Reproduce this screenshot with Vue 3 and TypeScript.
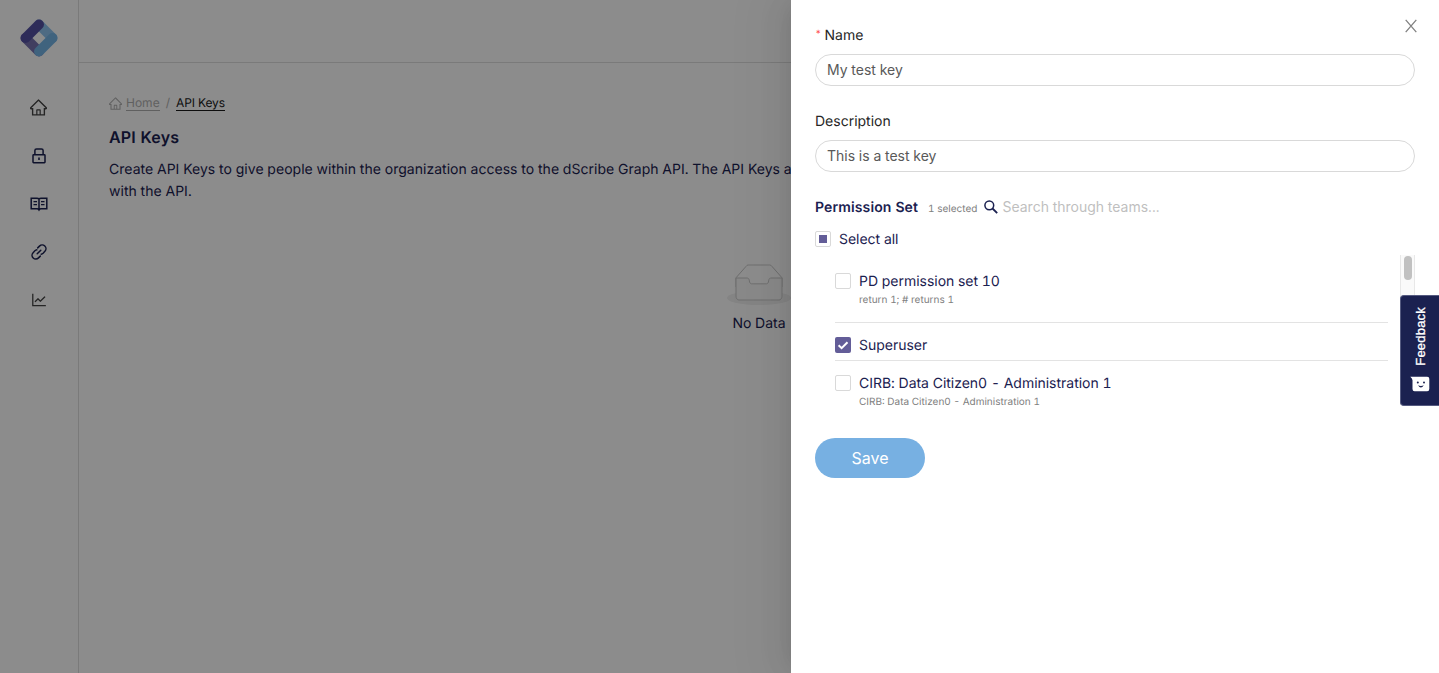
<script setup lang="ts">
import { ref } from 'vue'

interface Permission {
  name: string
  note?: string
  checked: boolean
}

const keyName = ref('My test key')
const description = ref('This is a test key')
const search = ref('')
const permissions = ref<Permission[]>([
  { name: 'PD permission set 10', note: 'return 1; # returns 1', checked: false },
  { name: 'Superuser', checked: true },
  { name: 'CIRB: Data Citizen0 - Administration 1', note: 'CIRB: Data Citizen0 - Administration 1', checked: false },
])
const homePath =
  'M946.5 505L560.1 118.8l-25.9-25.9a31.5 31.5 0 00-44.4 0L77.5 505a63.9 63.9 0 00-18.8 46c.4 35.2 29.7 63.3 64.9 63.3h42.5V940h691.8V614.3h43.4c17.1 0 33.2-6.7 45.3-18.8a63.6 63.6 0 0018.7-45.3c0-17-6.7-33.1-18.8-45.2zM568 868H456V664h112v204zm217.9-325.7V868H632V640c0-22.1-17.9-40-40-40H432c-22.1 0-40 17.9-40 40v228H238.1V542.3h-96l370-369.7 23.1 23.1L882 542.3h-96.1z'
</script>

<template>
  <div class="app">
    <aside class="sidebar">
      <svg class="logo" width="38" height="38" viewBox="0 0 38 38">
        <g fill="none" stroke-linecap="round" stroke-width="9.9">
          <path d="M19 5.500 L32.500 19" stroke="#8fc4ee" />
          <path d="M5.500 19 L19 32.500" stroke="#7771b0" />
          <path d="M32.500 19 L19 32.500" stroke="#76b4e6" />
          <path d="M19 5.500 L5.500 19" stroke="#5551a2" />
        </g>
      </svg>
      <nav class="nav">
        <a class="nav-item dark home">
          <svg width="17" height="17" viewBox="64 64 896 896" fill="currentColor"><path :d="homePath" /></svg>
        </a>
        <a class="nav-item">
          <svg width="16" height="16" viewBox="0 0 16 16" fill="none" stroke="currentColor" stroke-width="1.5">
            <rect x="2" y="6.800" width="12" height="7.900" rx=".6" />
            <path d="M3.900 7V2.600Q3.900 1 5.500 1h5Q12.100 1 12.100 2.600V7" />
            <path d="M8 9.400v2.600" stroke-width="1.600" />
          </svg>
        </a>
        <a class="nav-item">
          <svg width="18" height="16" viewBox="0 0 18 16" fill="none" stroke="currentColor" stroke-width="1.500">
            <path d="M9 3Q8.400 2.200 7 2.200H1.200v10.600H7q1.400 0 2 1.100q.6-1.100 2-1.100h5.800V2.200H11Q9.600 2.200 9 3V14.500" />
            <path d="M3.500 5.600h3.500M3.500 8.700h3.500M11 5.600h3.500M11 8.700h3.500" stroke-width="1.300" />
          </svg>
        </a>
        <a class="nav-item">
          <svg width="16" height="16" viewBox="0 0 16 16" fill="none" stroke="currentColor" stroke-width="1.500" stroke-linecap="round">
            <path d="M6.700 3.900L8.500 2.100A3.600 3.600 0 0 1 13.900 7.300L12.100 9.200Q11.200 10 10.200 10.200" />
            <path d="M9.300 12.100L7.500 13.900A3.600 3.600 0 0 1 2.100 8.700L3.900 6.800Q4.800 6 5.800 5.800" />
            <path d="M6.200 9.800L9.800 6.200" />
          </svg>
        </a>
        <a class="nav-item dark">
          <svg width="16" height="16" viewBox="64 64 896 896" fill="currentColor">
            <path d="M888 792H200V168c0-4.400-3.600-8-8-8h-56c-4.400 0-8 3.600-8 8v688c0 4.400 3.600 8 8 8h752c4.400 0 8-3.600 8-8v-56c0-4.400-3.600-8-8-8zM305.800 637.700c3.100 3.100 8.100 3.100 11.300 0l138.300-137.600L583 628.500c3.100 3.100 8.200 3.100 11.300 0l275.400-275.300c3.100-3.100 3.100-8.200 0-11.300l-39.600-39.600a8.030 8.030 0 00-11.300 0l-230 229.900L461.400 404a8.030 8.030 0 00-11.300 0L266.300 586.700a8.030 8.030 0 000 11.300l39.500 39.700z" />
          </svg>
        </a>
      </nav>
    </aside>

    <div class="page">
      <header class="topbar"></header>
      <main class="content">
        <div class="crumbs">
          <svg width="13" height="13" viewBox="64 64 896 896" fill="currentColor"><path :d="homePath" /></svg>
          <a class="crumb">Home</a><span class="sep">/</span><a class="crumb current">API Keys</a>
        </div>
        <h1>API Keys</h1>
        <p class="intro">
          Create API Keys to give people within the organization access to the dScribe Graph API. The API Keys are
          used to<br />with the API.
        </p>
        <div class="empty">
          <svg width="64" height="41" viewBox="0 0 64 41">
            <g transform="translate(0 1)" fill="none">
              <ellipse cx="32" cy="33" rx="32" ry="7" fill="#f0f0f0" />
              <g stroke="#c8c8c8">
                <path d="M55 12.760L44.854 1.258C44.367.474 43.656 0 42.907 0H21.093c-.749 0-1.460.474-1.947 1.257L9 12.761V22h46v-9.240z" />
                <path fill="#fafafa" d="M41.613 15.931c0-1.605.994-2.930 2.227-2.931H55v18.137C55 33.260 53.680 35 52.050 35h-40.100C10.320 35 9 33.259 9 31.137V13h11.160c1.233 0 2.227 1.323 2.227 2.928v.022c0 1.605 1.005 2.901 2.237 2.901h14.752c1.232 0 2.237-1.308 2.237-2.913v-.007z" />
              </g>
            </g>
          </svg>
          <span>No Data</span>
        </div>
      </main>
    </div>

    <div class="mask"></div>

    <section class="drawer">
      <button class="close" aria-label="Close">
        <svg width="12" height="14" viewBox="0 0 12 14" fill="none" stroke="currentColor" stroke-width="1.300">
          <path d="M.7 .9L11.300 13.100M11.300 .9L.7 13.100" />
        </svg>
      </button>
      <label class="label"><span class="star">*</span>Name</label>
      <input v-model="keyName" class="input" type="text" />
      <label class="label second">Description</label>
      <input v-model="description" class="input" type="text" />

      <div class="set-head">
        <strong>Permission Set</strong>
        <span class="count">1 selected</span>
        <svg width="14" height="14" viewBox="0 0 14 14" fill="none" stroke="currentColor" stroke-width="1.500">
          <circle cx="5.300" cy="5.300" r="4.400" />
          <path d="M8.500 8.500L13.200 13.200" stroke-width="1.800" />
        </svg>
        <input v-model="search" class="search" placeholder="Search through teams..." />
      </div>
      <div class="check-row all"><span class="box partial"></span><span class="text">Select all</span></div>

      <div class="list">
        <div class="items">
          <div v-for="p in permissions" :key="p.name" class="item" :class="{ noted: p.note }">
            <div class="check-row">
              <span class="box" :class="{ on: p.checked }">
                <svg v-if="p.checked" width="16" height="16" viewBox="0 0 16 16" fill="none" stroke="#fff" stroke-width="2">
                  <path d="M3.600 8.300L6.600 11.200L12.500 5.200" />
                </svg>
              </span>
              <span class="text">{{ p.name }}</span>
            </div>
            <div v-if="p.note" class="note">{{ p.note }}</div>
          </div>
        </div>
        <div class="track"><div class="thumb"></div></div>
      </div>

      <button class="save">Save</button>
    </section>

    <button class="feedback">
      <span>Feedback</span>
      <svg width="20" height="16" viewBox="0 0 20 16">
        <path fill="#fff" d="M.3 .8H17.200Q19.300 .8 19.300 2.800V13Q19.300 15.200 17.200 15.200H4.600Q2.500 15.200 2.500 13V4.300Q2.300 2.500 .3 .8z" />
        <circle cx="7.800" cy="6.400" r="1" fill="#1b2150" />
        <circle cx="14" cy="6.400" r="1" fill="#1b2150" />
        <path d="M8 9.200Q10.900 14 13.800 9.200Q10.900 10.600 8 9.200z" fill="#1b2150" />
      </svg>
    </button>
  </div>
</template>

<style>
body {
  margin: 0;
  overflow: hidden;
}
</style>

<style scoped>
* {
  box-sizing: border-box;
}
.app {
  position: relative;
  display: flex;
  width: 100%;
  height: 100vh;
  overflow: hidden;
  background: #fff;
  color: #1b2150;
  font: 14px/22px Inter, "Liberation Sans", sans-serif;
  font-variant-numeric: tabular-nums;
  text-rendering: geometricPrecision;
}
.sidebar {
  width: 79px;
  flex: none;
  display: flex;
  flex-direction: column;
  align-items: center;
  border-right: 1px solid #dedede;
  padding: 19px 1px 0 0;
}
.logo {
  display: block;
}
.nav {
  display: flex;
  flex-direction: column;
  margin-top: 27px;
}
.nav-item {
  display: flex;
  align-items: center;
  justify-content: center;
  width: 48px;
  height: 48px;
}
.nav-item.dark {
  color: #444;
}
.nav-item.home {
  padding-bottom: 1px;
}
.page {
  flex: 1;
  min-width: 0;
}
.topbar {
  height: 63px;
  border-bottom: 1px solid #dedede;
}
.content {
  padding: 30px 30px 0;
}
.crumbs {
  display: flex;
  align-items: center;
  height: 20px;
  color: #b0b0b0;
  font-size: 12px;
  line-height: 14px;
}
.crumb {
  margin-left: 4px;
  border-bottom: 1px solid currentColor;
}
.sep {
  margin: 0 2px 0 6px;
}
.crumb.current {
  color: #1a1a1a;
  letter-spacing: -0.1px;
}
h1 {
  margin: 13px 0 11px;
  font-size: 16px;
  line-height: 22px;
  font-weight: 600;
  letter-spacing: 0.2px;
}
.intro {
  margin: 0;
  white-space: nowrap;
  letter-spacing: 0.025px;
}
.empty {
  width: 64px;
  margin: 61px 0 0 618px;
  display: flex;
  flex-direction: column;
  align-items: center;
  gap: 8px;
  white-space: nowrap;
}
.mask {
  position: absolute;
  inset: 0;
  background: rgba(0, 0, 0, 0.45);
}
.drawer {
  position: absolute;
  top: 0;
  right: 0;
  bottom: 0;
  width: 648px;
  padding: 24px;
  background: #fff;
  box-shadow: -6px 0 16px -8px rgba(0, 0, 0, 0.08), -9px 0 28px rgba(0, 0, 0, 0.05), -12px 0 48px 16px rgba(0, 0, 0, 0.03);
}
button {
  border: 0;
  padding: 0;
  font: inherit;
}
.close {
  position: absolute;
  top: 19px;
  right: 22px;
  width: 12px;
  height: 14px;
  display: flex;
  background: none;
  color: #808080;
}
.label {
  display: flex;
  height: 22px;
  margin-bottom: 8px;
  line-height: 24px;
  color: #262626;
}
.label.second {
  margin-top: 24px;
}
.star {
  margin: -2px 3px 0 0;
  color: #ff4d4f;
  font-size: 10px;
}
.input {
  display: block;
  width: 600px;
  height: 32px;
  padding: 0 11px 1px;
  border: 1px solid #d9d9d9;
  border-radius: 16px;
  outline: 0;
  color: #595959;
  font: inherit;
}
.set-head {
  display: flex;
  align-items: center;
  height: 22px;
  margin-top: 24px;
}
strong {
  padding-top: 2px;
  font-weight: 600;
  letter-spacing: 0.12px;
}
.count {
  margin: 3px 7px 0 10px;
  color: #808080;
  font-size: 10px;
}
.search {
  width: 200px;
  margin-left: 4px;
  padding: 0;
  border: 0;
  outline: 0;
  font: inherit;
}
.search::placeholder {
  color: #bfbfbf;
  opacity: 1;
}
.check-row {
  display: flex;
  align-items: center;
  gap: 8px;
  height: 22px;
  white-space: nowrap;
}
.text {
  padding-top: 2px;
  letter-spacing: -0.02px;
}
.all {
  margin-top: 10px;
}
.box {
  display: flex;
  align-items: center;
  justify-content: center;
  width: 16px;
  height: 16px;
  flex: none;
  border: 1px solid #d9d9d9;
  border-radius: 2px;
}
.box.partial::after {
  content: "";
  width: 8px;
  height: 8px;
  background: #635d98;
}
.box.on {
  border: 0;
  background: #635d98;
}
.list {
  display: flex;
  height: 150px;
  margin-top: 5px;
  overflow: hidden;
}
.items {
  width: 553px;
  margin-left: 20px;
  padding-top: 4px;
}
.item {
  height: 38px;
  padding-top: 10.5px;
  border-bottom: 1px solid #e3e3e3;
}
.item.noted {
  height: 64px;
}
.note {
  margin: 0 0 0 24px;
  color: #808080;
  font-size: 10px;
  line-height: 16px;
}
.track {
  width: 15px;
  margin-left: 12px;
  padding: 1px 3px;
  border: solid #e8e8e8;
  border-width: 0 1px;
  background: #fafafa;
}
.thumb {
  width: 8px;
  height: 24px;
  border-radius: 4px;
  background: #c1c1c1;
}
.save {
  display: block;
  width: 110px;
  height: 40px;
  margin-top: 33px;
  border-radius: 20px;
  background: #77b0e2;
  color: #fff;
  font-size: 16px;
}
.feedback {
  position: absolute;
  right: 0;
  top: 295px;
  width: 39px;
  height: 111px;
  padding: 11px 0 13px;
  display: flex;
  flex-direction: column;
  align-items: center;
  justify-content: space-between;
  border: 1px solid #555a80;
  border-right: 0;
  border-radius: 4px 0 0 4px;
  background: #1b2150;
  color: #fff;
}
.feedback span {
  margin-left: 2px;
  writing-mode: vertical-rl;
  transform: rotate(180deg);
  font: 400 13px/16px "Liberation Sans", Arial, sans-serif;
  letter-spacing: 0.2px;
  -webkit-text-stroke: 0.3px #fff;
}
</style>
